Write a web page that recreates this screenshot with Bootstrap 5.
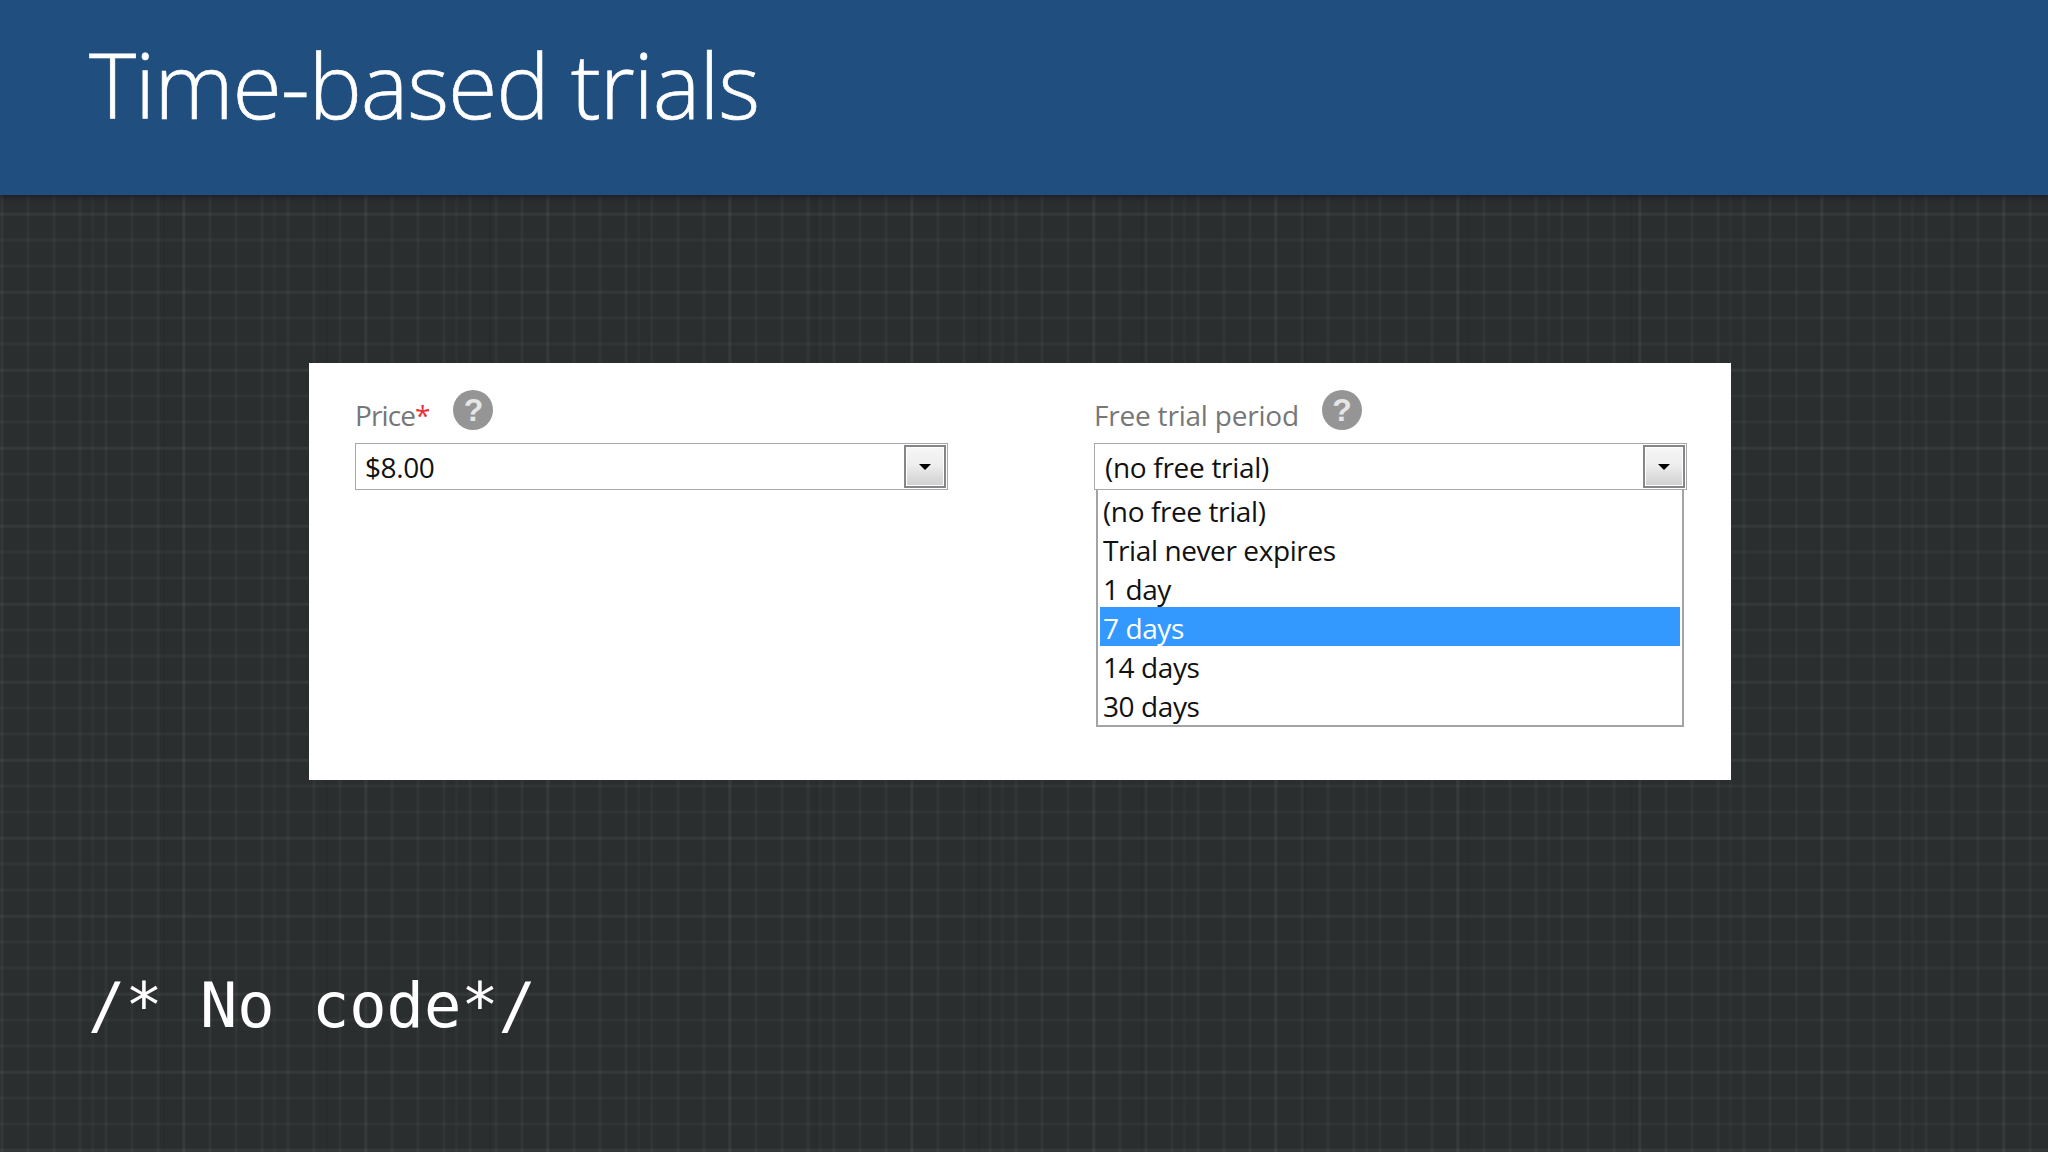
<!doctype html>
<html lang="en">
  <head>
    <meta charset="UTF-8" />
    <meta name="viewport" content="width=device-width, initial-scale=1" />
    <title>Time-based trials</title>
    <link href="https://cdn.jsdelivr.net/npm/bootstrap@5.3.0/dist/css/bootstrap.min.css" rel="stylesheet" />
    <style>
      html, body { height: 100%; }
      body {
        background-color: #2a2e2f;
        background-image:
          repeating-linear-gradient(90deg, transparent 0, rgba(255,255,255,.035) 1px, rgba(255,255,255,.035) 3px, transparent 4px, transparent 26px),
          repeating-linear-gradient(0deg, transparent 0, rgba(255,255,255,.03) 1px, rgba(255,255,255,.03) 3px, transparent 4px, transparent 26px),
          repeating-linear-gradient(90deg, rgba(255,255,255,.018) 0 3px, transparent 3px 91px),
          repeating-linear-gradient(0deg, rgba(255,255,255,.018) 0 3px, transparent 3px 78px),
          repeating-linear-gradient(90deg, rgba(0,0,0,.06) 0 2px, transparent 2px 163px);
        font-family: "Open Sans", "Noto Sans", sans-serif;
        overflow: hidden;
      }
      .slide-head {
        height: 195px;
        background: #1f4e7f;
        box-shadow: 0 2px 5px rgba(20,20,40,.7);
        padding-left: 89px;
        padding-top: 19px;
      }
      .slide-title {
        color: #fff;
        font-size: 90px;
        font-weight: 300;
        line-height: 130px;
        letter-spacing: -1.2px;
        -webkit-text-stroke: .6px #fff;
        margin: 0;
      }
      .form-panel {
        width: 1422px;
        height: 417px;
        margin: 168px 0 0 309px;
        background: #fff;
        padding: 24px 0 0 46px;
      }
      .field-left { width: 593px; margin-right: 146px; }
      .field-right { width: 593px; }
      .field-label {
        height: 56px;
        color: #777;
        font-size: 28px;
        letter-spacing: -.2px;
        gap: 23px;
        padding-top: 3px;
      }
      .field-label span { line-height: 48px; padding-top: 1px; }
      .field-label .req { padding: 0; color: #e8303a; }
      .field-left .field-label { letter-spacing: -.9px; }
      .combo {
        height: 47px;
        border: 1px solid #a8a8ac;
        color: #111;
        font-size: 28px;
        letter-spacing: -.4px;
        padding-left: 9px;
        line-height: 47px;
      }
      .field-right .combo { padding-left: 10px; letter-spacing: -.3px; }
      .combo-btn {
        width: 42px;
        height: 43px;
        margin: 1px 1px 0 0;
        border: 2px solid #85858a;
        box-shadow: inset 0 0 0 1px #fff;
        background: linear-gradient(#f6f6f6 0, #eee 45%, #cfcfcf 100%);
      }
      .combo-caret {
        width: 0;
        height: 0;
        border-left: 6px solid transparent;
        border-right: 6px solid transparent;
        border-top: 6px solid #000;
      }
      .combo-list {
        width: 588px;
        height: 237px;
        margin-left: 2px;
        border: 2px solid #a4a4a8;
        border-top: 0;
        padding: 0 2px;
      }
      .combo-item {
        height: 39px;
        line-height: 43px;
        padding-left: 3px;
        color: #111;
        font-size: 28px;
        letter-spacing: -.4px;
      }
      .combo-item.is-picked { background: #3399ff; color: #fff; }
      .slide-code {
        font-family: "DejaVu Sans Mono", monospace;
        font-size: 62px;
        line-height: 80px;
        color: #fff;
        margin: 186px 0 0 88px;
      }
    </style>
  </head>
  <body>
    <header class="slide-head">
      <h1 class="slide-title">Time-based trials</h1>
    </header>

    <div class="form-panel d-flex">
      <div class="field-left">
        <div class="field-label d-flex align-items-start">
          <span>Price<span class="req">*</span></span>
          <svg width="40" height="40" viewBox="0 0 40 40"><circle cx="20" cy="20" r="20" fill="#959595"/><text x="20" y="31" text-anchor="middle" font-family="Liberation Sans" font-weight="700" font-size="32" fill="#e6e6e6">?</text></svg>
        </div>
        <div class="combo d-flex justify-content-between">
          <span>$8.00</span>
          <div class="combo-btn d-flex align-items-center justify-content-center"><div class="combo-caret"></div></div>
        </div>
      </div>
      <div class="field-right">
        <div class="field-label d-flex align-items-start">
          <span>Free trial period</span>
          <svg width="40" height="40" viewBox="0 0 40 40"><circle cx="20" cy="20" r="20" fill="#959595"/><text x="20" y="31" text-anchor="middle" font-family="Liberation Sans" font-weight="700" font-size="32" fill="#e6e6e6">?</text></svg>
        </div>
        <div class="combo d-flex justify-content-between">
          <span>(no free trial)</span>
          <div class="combo-btn d-flex align-items-center justify-content-center"><div class="combo-caret"></div></div>
        </div>
        <div class="combo-list">
          <div class="combo-item">(no free trial)</div>
          <div class="combo-item">Trial never expires</div>
          <div class="combo-item">1 day</div>
          <div class="combo-item is-picked">7 days</div>
          <div class="combo-item">14 days</div>
          <div class="combo-item">30 days</div>
        </div>
      </div>
    </div>

    <div class="slide-code">/* No code*/</div>

    <script src="https://cdn.jsdelivr.net/npm/bootstrap@5.3.0/dist/js/bootstrap.bundle.min.js"></script>
  </body>
</html>
